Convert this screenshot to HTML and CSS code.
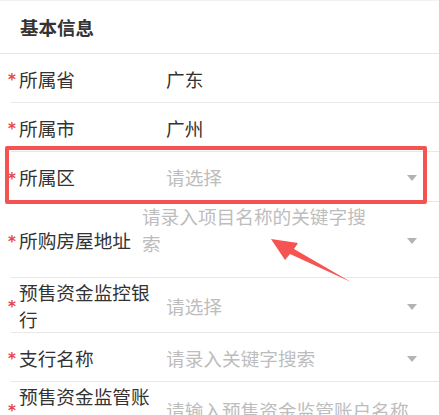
FILE: index.html
```html
<!DOCTYPE html>
<html lang="zh-CN">
<head>
<meta charset="utf-8">
<title>基本信息</title>
<link rel="stylesheet" href="styles.css">
</head>
<body>
<div class="page">
  <div class="header">基本信息</div>
  <div class="form">
    <div class="row">
      <span class="star">*</span>
      <span class="label">所属省</span>
      <span class="value">广东</span>
    </div>
    <div class="row">
      <span class="star">*</span>
      <span class="label">所属市</span>
      <span class="value">广州</span>
    </div>
    <div class="row row-hl">
      <span class="star">*</span>
      <span class="label">所属区</span>
      <span class="value placeholder">请选择</span>
      <span class="caret"></span>
    </div>
    <div class="row row-tall">
      <span class="star">*</span>
      <span class="label label-auto">所购房屋地址</span>
      <span class="value placeholder value-area">请录入项目名称的关键字搜索</span>
      <span class="caret"></span>
    </div>
    <div class="row">
      <span class="star">*</span>
      <span class="label">预售资金监控银行</span>
      <span class="value placeholder">请选择</span>
      <span class="caret"></span>
    </div>
    <div class="row">
      <span class="star">*</span>
      <span class="label">支行名称</span>
      <span class="value placeholder">请录入关键字搜索</span>
      <span class="caret"></span>
    </div>
    <div class="row">
      <span class="star">*</span>
      <span class="label">预售资金监管账户名称</span>
      <span class="value placeholder">请输入预售资金监管账户名称</span>
    </div>
  </div>
  <div class="highlight"></div>
  <svg class="arrow" width="439" height="415" viewBox="0 0 439 415">
    <polygon points="271,239 298,243 294,249 351,282 290,254 285,260" fill="#f65353"/>
  </svg>
</div>
</body>
</html>
```

FILE: styles.css
```css
html, body {
  margin: 0;
  padding: 0;
  background: #ffffff;
}
body {
  font-family: "Noto Sans CJK SC", "Noto Sans", sans-serif;
  color: #333333;
  font-size: 18.67px;
  line-height: 27px;
  overflow: hidden;
}
.page {
  position: relative;
  width: 439px;
  height: 415px;
  overflow: hidden;
}
.header {
  height: 52px;
  border-top: 1px solid #f2f2f2;
  border-bottom: 1px solid #e6e6e6;
  padding-left: 20px;
  display: flex;
  align-items: center;
  font-weight: bold;
  font-size: 18.5px;
  color: #333333;
}
.row {
  display: flex;
  align-items: center;
  min-height: 48px;
  margin-left: 11px;
  padding-right: 22px;
  border-bottom: 1px solid #e8e8e8;
}
.row-hl {
  min-height: 49px;
}
.row-tall {
  min-height: 75px;
}
.star {
  width: 11px;
  margin-left: -3px;
  flex: none;
  color: #e84545;
  font-family: "DejaVu Sans", sans-serif;
  font-size: 15px;
  font-weight: bold;
  line-height: 15px;
  padding-top: 5px;
}
.label {
  width: 140px;
  flex: none;
  color: #333333;
}
.label-auto {
  width: auto;
}
.value {
  flex: 1;
  margin-left: 7px;
  color: #333333;
}
.placeholder {
  color: #bdbdbd;
}
.value-area {
  flex: none;
  width: 232px;
  margin-left: 11px;
  margin-right: auto;
  align-self: flex-start;
}
.caret {
  flex: none;
  width: 0;
  height: 0;
  border-left: 5.5px solid transparent;
  border-right: 5.5px solid transparent;
  border-top: 6px solid #b3b3b3;
  margin-top: 3px;
}
.highlight {
  position: absolute;
  left: 5px;
  top: 146px;
  width: 414px;
  height: 50px;
  border: 4px solid #f55252;
  border-radius: 2px;
}
.arrow {
  position: absolute;
  left: 0;
  top: 0;
}
```
